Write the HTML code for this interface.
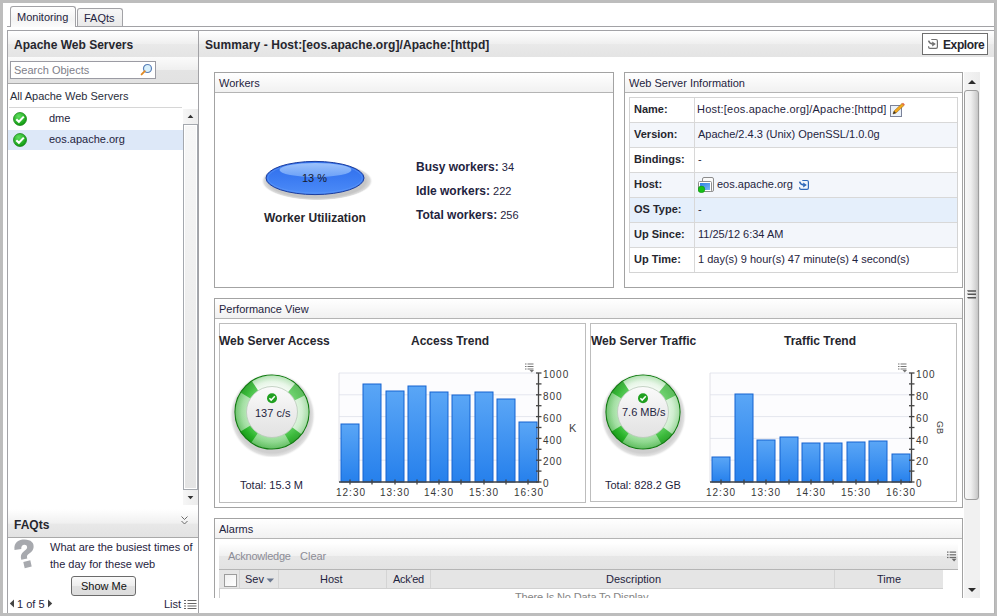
<!DOCTYPE html>
<html><head><meta charset="utf-8"><style>
*{box-sizing:border-box;margin:0;padding:0}
html,body{width:997px;height:616px;overflow:hidden}
body{position:relative;background:#bdbdbd;font-family:"Liberation Sans",sans-serif;font-size:11px;color:#1f2440}
.a{position:absolute}
.t{position:absolute;white-space:nowrap;line-height:13px}
.b{font-weight:bold;font-size:12px;color:#26262e}
.hd{background:linear-gradient(#ffffff 0%,#efefef 50%,#e9e9e9 52%,#e4e4e4 100%)}
.pn{position:absolute;border:1px solid #a3a3a3;background:#fff}
.ax{font-size:10px;color:#383838;letter-spacing:1px;line-height:13px}
.ph{position:absolute;left:0;top:0;right:0;height:20px;border-bottom:1px solid #b4b4b4;background:linear-gradient(#ffffff,#f1f1f1)}
</style></head><body>
<div class="a" style="left:3px;top:3px;width:991px;height:610px;background:#fff"></div>
<div class="a" style="left:994px;top:3px;width:1px;height:611px;background:#b3b3b3"></div>

<!-- tabs -->
<div class="a" style="left:7px;top:26px;width:987px;height:1px;background:#a2a2a6"></div>
<div class="a" style="left:10px;top:6px;width:66px;height:21px;border:1px solid #a2a2a6;border-bottom:none;border-radius:3px 3px 0 0;background:linear-gradient(#fff 0%,#f3f3f3 60%,#fbfbfb)"></div>
<div class="t" style="left:17px;top:11px">Monitoring</div>
<div class="a" style="left:77px;top:8px;width:46px;height:18px;border:1px solid #a2a2a6;border-bottom:none;border-radius:3px 3px 0 0;background:linear-gradient(#f7f7f7,#e9e9e9)"></div>
<div class="t" style="left:84px;top:12px">FAQts</div>

<!-- main frame -->
<div class="a" style="left:7px;top:30px;width:987px;height:1px;background:#a2a2a6"></div>
<div class="a" style="left:7px;top:30px;width:1px;height:583px;background:#a2a2a6"></div>
<div class="a" style="left:198px;top:30px;width:1px;height:583px;background:#a2a2a6"></div>

<!-- left panel -->
<div class="a hd" style="left:8px;top:31px;width:190px;height:26px"></div>
<div class="t b" style="left:14px;top:39px">Apache Web Servers</div>

<div class="a" style="left:8px;top:57px;width:190px;height:27px;border-bottom:1px solid #a9a9a9;background:linear-gradient(#fbfbfb 0%,#efefef 50%,#e4e4e4 50%,#e2e2e2 100%)"></div>
<div class="a" style="left:10px;top:61px;width:146px;height:18px;border:1px solid #9b9ba3;background:#fff"></div>
<div class="t" style="left:14px;top:64px;color:#80808a">Search Objects</div>
<svg class="a" style="left:139px;top:63px" width="14" height="14" viewBox="0 0 14 14"><circle cx="8.5" cy="5.5" r="4" fill="#d8f0fc" stroke="#5a7fb8" stroke-width="1.2"/><line x1="5.8" y1="8.2" x2="2.6" y2="11.4" stroke="#e08a26" stroke-width="1.9" stroke-linecap="round"/></svg>
<div class="t" style="left:10px;top:90px;color:#2a2e3c">All Apache Web Servers</div>
<div class="a" style="left:9px;top:107px;width:173px;height:1px;background:#d6d6d6"></div>
<div class="a" style="left:8px;top:130px;width:175px;height:20px;background:#dde8f8"></div>
<svg class="a" style="left:13px;top:112px" width="14" height="14" viewBox="0 0 14 14"><defs><radialGradient id="gck" cx="0.4" cy="0.3" r="0.7"><stop offset="0" stop-color="#5fe05f"/><stop offset="1" stop-color="#109a10"/></radialGradient></defs><circle cx="7" cy="7" r="6.5" fill="url(#gck)" stroke="#0b7a0b" stroke-width="0.7"/><path d="M3.3 7.2 L5.9 9.8 L10.8 4.6" fill="none" stroke="#fff" stroke-width="2.1"/></svg>
<svg class="a" style="left:13px;top:133px" width="14" height="14" viewBox="0 0 14 14"><circle cx="7" cy="7" r="6.5" fill="url(#gck)" stroke="#0b7a0b" stroke-width="0.7"/><path d="M3.3 7.2 L5.9 9.8 L10.8 4.6" fill="none" stroke="#fff" stroke-width="2.1"/></svg>
<div class="t" style="left:49px;top:112px">dme</div>
<div class="t" style="left:49px;top:133px">eos.apache.org</div>
<!-- left scrollbar -->
<div class="a" style="left:183px;top:109px;width:15px;height:396px;background:#f4f4f4"></div>
<div class="a" style="left:183px;top:109px;width:15px;height:15px;background:linear-gradient(90deg,#f6f6f6,#ececec)"></div>
<svg class="a" style="left:185px;top:113px" width="11" height="6"><path d="M2.6 5 L5.5 1.8 L8.4 5Z" fill="#333"/></svg>
<div class="a" style="left:183px;top:124px;width:15px;height:366px;border:1px solid #a4a8ae;border-top-color:#a4a8ae;background:#fff"></div>
<div class="a" style="left:185px;top:126px;width:11px;height:362px;background:linear-gradient(#f7f7f7,#e4e4e4)"></div>
<div class="a" style="left:183px;top:490px;width:15px;height:15px;background:linear-gradient(90deg,#f6f6f6,#ececec)"></div>
<svg class="a" style="left:185px;top:495px" width="11" height="6"><path d="M2.6 1 L5.5 4.2 L8.4 1Z" fill="#333"/></svg>
<!-- FAQts -->
<div class="a" style="left:8px;top:509px;width:190px;height:29px;border-bottom:1px solid #a9a9a9;background:linear-gradient(#ffffff 0%,#f0f0f0 50%,#e8e8e8 55%,#e2e2e2 100%)"></div>
<div class="t b" style="left:14px;top:519px">FAQts</div>
<svg class="a" style="left:180px;top:515px" width="10" height="12"><path d="M1.5 1.5 L4.5 4.5 L7.5 1.5 M1.5 6 L4.5 9 L7.5 6" fill="none" stroke="#6a6a6a" stroke-width="1"/></svg>
<svg class="a" style="left:12px;top:538px" width="24" height="32" viewBox="0 0 24 32"><path d="M2.5 12 C1.5 4 7 1.5 12.5 1.5 C19 1.5 22.5 5 21.5 10 C20.8 13.5 18 15 16 16.5 C14.5 17.6 15 19 15.3 20.5 L9.3 21.8 C8.2 18 9 15.2 12 13.2 C14.3 11.7 15.3 10.5 15.1 9 C14.9 7.3 13.6 6.6 12 6.8 C9.8 7.1 9.1 8.8 9.3 11 Z M11.3 24 L18.3 22.3 L19.7 28.6 L12.7 30.3 Z" fill="#a7a9ae"/></svg>
<div class="t" style="left:50px;top:539px;line-height:17px;width:150px;white-space:normal">What are the busiest times of<br>the day for these web</div>
<div class="a" style="left:71px;top:576px;width:65px;height:20px;border:1px solid #6b6b6b;border-radius:3px;background:linear-gradient(#fafafa 0%,#ededed 50%,#e1e1e1 52%,#dcdcdc 100%)"></div>
<div class="t" style="left:81px;top:580px;color:#111">Show Me</div>
<svg class="a" style="left:9px;top:599px" width="6" height="9"><path d="M5 0.5 L0.8 4.5 L5 8.5Z" fill="#444"/></svg>
<div class="t" style="left:17px;top:598px">1 of 5</div>
<svg class="a" style="left:47px;top:599px" width="6" height="9"><path d="M1 0.5 L5.2 4.5 L1 8.5Z" fill="#444"/></svg>
<div class="t" style="left:164px;top:598px">List</div>
<svg class="a" style="left:184px;top:599px" width="13" height="11"><g fill="#666"><rect x="0" y="1" width="2" height="1"/><rect x="0" y="4" width="2" height="1"/><rect x="0" y="6.5" width="2" height="1"/><rect x="0" y="9" width="2" height="1"/><rect x="3.5" y="1" width="9" height="1"/><rect x="3.5" y="4" width="9" height="1"/><rect x="3.5" y="6.5" width="9" height="1"/><rect x="3.5" y="9" width="9" height="1"/></g></svg>

<!-- right header -->
<div class="a hd" style="left:199px;top:31px;width:795px;height:26px;background:linear-gradient(#ffffff 0%,#efefef 50%,#e9e9e9 52%,#e4e4e4 100%)"></div>
<div class="t b" style="left:205px;top:39px;letter-spacing:0.08px">Summary - Host:[eos.apache.org]/Apache:[httpd]</div>
<div class="a" style="left:922px;top:33px;width:66px;height:22px;border:1px solid #6e6e6e;background:#fff"></div>
<svg class="a" style="left:927px;top:38px" width="12" height="12" viewBox="0 0 12 12"><path d="M4.3 1.5 H9 Q10.4 1.5 10.4 3 V9 Q10.4 10.4 9 10.4 H3 Q1.6 10.4 1.6 9 V8.3" fill="none" stroke="#707070" stroke-width="1.2"/><path d="M1.6 2.6 Q2.4 5.6 5.6 5.9" fill="none" stroke="#707070" stroke-width="1.6"/><path d="M5.2 3.6 L8.8 6 L5.2 8.4Z" fill="#707070"/></svg>
<div class="t b" style="left:943px;top:39px;letter-spacing:-0.4px">Explore</div>

<!-- Workers -->
<div class="pn" style="left:214px;top:72px;width:400px;height:216px"><div class="ph"></div></div>
<div class="t" style="left:219px;top:77px">Workers</div>
<svg class="a" style="left:258px;top:156px" width="118" height="48" viewBox="0 0 118 48">
<defs>
<radialGradient id="gsh" cx="0.5" cy="0.5" r="0.5"><stop offset="0.87" stop-color="#c6c6c6"/><stop offset="0.95" stop-color="#dddddd"/><stop offset="1" stop-color="#ffffff" stop-opacity="0"/></radialGradient>
<linearGradient id="gbl" x1="0" y1="0" x2="0" y2="1"><stop offset="0" stop-color="#2f6cea"/><stop offset="0.5" stop-color="#3b7bf2"/><stop offset="1" stop-color="#4d8cf7"/></linearGradient>
<linearGradient id="ghl" x1="0" y1="0" x2="0" y2="1"><stop offset="0" stop-color="#a2c6fc"/><stop offset="1" stop-color="#6ea3f8"/></linearGradient>
</defs>
<ellipse cx="59" cy="25" rx="56" ry="19.5" fill="url(#gsh)"/>
<ellipse cx="57" cy="22" rx="49" ry="16.6" fill="url(#gbl)" stroke="#1a3c9e" stroke-width="1"/>
<ellipse cx="57" cy="22" rx="47.3" ry="15" fill="none" stroke="#5d97f8" stroke-width="1" opacity="0.6"/>
<ellipse cx="57.5" cy="14" rx="36" ry="7" fill="url(#ghl)" opacity="0.95"/>
</svg>
<div class="t" style="left:302px;top:172px;color:#1a1a2a">13 %</div>
<div class="t b" style="left:264px;top:212px">Worker Utilization</div>
<div class="t" style="left:416px;top:161px"><b style="font-size:12px">Busy workers:</b> 34</div>
<div class="t" style="left:416px;top:185px"><b style="font-size:12px">Idle workers:</b> 222</div>
<div class="t" style="left:416px;top:209px"><b style="font-size:12px">Total workers:</b> 256</div>

<!-- Web Server Information -->
<div class="pn" style="left:624px;top:72px;width:339px;height:216px"><div class="ph"></div></div>
<div class="t" style="left:629px;top:77px">Web Server Information</div>
<div class="a" style="left:629px;top:97px;width:329px;height:176px;border:1px solid #d4d4d4;background:#fff"></div>
<div class="a" style="left:630px;top:123px;width:327px;height:24px;background:#f3f6fb"></div>
<div class="a" style="left:630px;top:173px;width:327px;height:24px;background:#f3f6fb"></div>
<div class="a" style="left:630px;top:198px;width:327px;height:24px;background:#e5effb"></div>
<div class="a" style="left:630px;top:223px;width:327px;height:24px;background:#f3f6fb"></div>
<div class="a" style="left:630px;top:122px;width:327px;height:1px;background:#d8d8d8"></div>
<div class="a" style="left:630px;top:147px;width:327px;height:1px;background:#d8d8d8"></div>
<div class="a" style="left:630px;top:172px;width:327px;height:1px;background:#d8d8d8"></div>
<div class="a" style="left:630px;top:197px;width:327px;height:1px;background:#d8d8d8"></div>
<div class="a" style="left:630px;top:222px;width:327px;height:1px;background:#d8d8d8"></div>
<div class="a" style="left:630px;top:247px;width:327px;height:1px;background:#d8d8d8"></div>
<div class="a" style="left:694px;top:98px;width:1px;height:174px;background:#d8d8d8"></div>
<div class="t b" style="left:634px;top:103px;font-size:11px">Name:</div>
<div class="t b" style="left:634px;top:128px;font-size:11px">Version:</div>
<div class="t b" style="left:634px;top:153px;font-size:11px">Bindings:</div>
<div class="t b" style="left:634px;top:178px;font-size:11px">Host:</div>
<div class="t b" style="left:634px;top:203px;font-size:11px">OS Type:</div>
<div class="t b" style="left:634px;top:228px;font-size:11px">Up Since:</div>
<div class="t b" style="left:634px;top:253px;font-size:11px">Up Time:</div>
<div class="t" style="left:697px;top:103px;letter-spacing:0.22px">Host:[eos.apache.org]/Apache:[httpd]</div>
<svg class="a" style="left:889px;top:102px" width="17" height="16" viewBox="0 0 17 16"><rect x="1.5" y="3.5" width="11" height="11" fill="#eaf1fa" stroke="#7b8299" stroke-width="1"/><path d="M4 12 L5 9 L13 1.5 L15 3.5 L7 11 Z" fill="#f2a81d" stroke="#8a5a10" stroke-width="0.5"/><path d="M13 1.5 L14 0.8 L15.8 2.6 L15 3.5Z" fill="#e85a3a"/><path d="M4 12 L5 9 L7 11Z" fill="#333"/></svg>
<div class="t" style="left:698px;top:128px">Apache/2.4.3 (Unix) OpenSSL/1.0.0g</div>
<div class="t" style="left:698px;top:153px">-</div>
<svg class="a" style="left:698px;top:177px" width="17" height="16" viewBox="0 0 17 16"><defs><linearGradient id="ghost" x1="0" y1="0" x2="1" y2="1"><stop offset="0" stop-color="#2f80e4"/><stop offset="1" stop-color="#7ab8f7"/></linearGradient></defs><rect x="4.5" y="0.5" width="11" height="14" rx="1.5" fill="#fafafa" stroke="#8c8c8c"/><rect x="0.5" y="4.5" width="13" height="10" rx="1" fill="#ffffff" stroke="#8c8c8c"/><rect x="2" y="6" width="10" height="7" fill="url(#ghost)"/><circle cx="3.5" cy="12.4" r="3.3" fill="#16c016" stroke="#0a8a0a" stroke-width="0.5"/></svg>
<div class="t" style="left:717px;top:178px">eos.apache.org</div>
<svg class="a" style="left:798px;top:179px" width="12" height="12" viewBox="0 0 12 12"><path d="M4.3 1.5 H9 Q10.4 1.5 10.4 3 V9 Q10.4 10.4 9 10.4 H3 Q1.6 10.4 1.6 9 V8.3" fill="none" stroke="#2f68b8" stroke-width="1.2"/><path d="M1.6 2.6 Q2.4 5.6 5.6 5.9" fill="none" stroke="#2f68b8" stroke-width="1.6"/><path d="M5.2 3.6 L8.8 6 L5.2 8.4Z" fill="#2f68b8"/></svg>
<div class="t" style="left:698px;top:203px">-</div>
<div class="t" style="left:698px;top:228px">11/25/12 6:34 AM</div>
<div class="t" style="left:698px;top:253px">1 day(s) 9 hour(s) 47 minute(s) 4 second(s)</div>

<!--PERF-->
<svg width="0" height="0" style="position:absolute"><defs><linearGradient id="gbar" x1="0" y1="0" x2="0" y2="1"><stop offset="0" stop-color="#5aa6f6"/><stop offset="1" stop-color="#2680ec"/></linearGradient>
<radialGradient id="gsh2" cx="0.5" cy="0.5" r="0.5"><stop offset="0.87" stop-color="#cfcfcf"/><stop offset="0.94" stop-color="#e2e2e2"/><stop offset="1" stop-color="#ffffff" stop-opacity="0"/></radialGradient>
<linearGradient id="ginner" x1="0" y1="0" x2="0" y2="1"><stop offset="0" stop-color="#fbfbfb"/><stop offset="0.5" stop-color="#ededed"/><stop offset="1" stop-color="#e2e2e2"/></linearGradient><radialGradient id="gring" cx="0.5" cy="0.5" r="0.5"><stop offset="0.65" stop-color="#48c848"/><stop offset="0.85" stop-color="#22b022"/><stop offset="1" stop-color="#169a16"/></radialGradient><linearGradient id="ggloss" x1="1" y1="0" x2="0" y2="1"><stop offset="0" stop-color="#ffffff" stop-opacity="0.35"/><stop offset="0.55" stop-color="#ffffff" stop-opacity="0.1"/><stop offset="1" stop-color="#ffffff" stop-opacity="0"/></linearGradient><radialGradient id="gstrap2" gradientUnits="userSpaceOnUse" cx="0" cy="0" r="37"><stop offset="0.66" stop-color="#ffffff"/><stop offset="0.82" stop-color="#e8f6e8"/><stop offset="1" stop-color="#a0daa0"/></radialGradient><linearGradient id="gstrap" x1="0" y1="0" x2="1" y2="1"><stop offset="0" stop-color="#f4fbf4"/><stop offset="1" stop-color="#d9efd9"/></linearGradient>
</defs></svg>
<div class="pn" style="left:214px;top:298px;width:749px;height:210px"><div class="ph"></div></div>
<div class="t" style="left:219px;top:303px">Performance View</div>
<div class="a" style="left:219px;top:323px;width:367px;height:180px;border:1px solid #bdbdbd"></div>
<div class="a" style="left:590px;top:323px;width:367px;height:179px;border:1px solid #bdbdbd"></div>
<div class="t b" style="left:219px;top:335px">Web Server Access</div>
<div class="t b" style="left:411px;top:335px">Access Trend</div>
<div class="t b" style="left:591px;top:335px">Web Server Traffic</div>
<div class="t b" style="left:784px;top:335px">Traffic Trend</div>
<svg class="a" style="left:227px;top:367px" width="90" height="90" viewBox="-45 -45 90 90">
<circle cx="0.5" cy="3.5" r="43" fill="url(#gsh2)"/>
<circle cx="0" cy="0" r="37" fill="url(#gring)" stroke="#127a12" stroke-width="1.2"/>
<path d="M-19.88 -30.61 A36.5 36.5 0 0 1 22.97 -28.37 L15.10 -18.65 A24 24 0 0 0 -13.07 -20.13Z" fill="url(#gstrap2)" opacity="0.95"/>
<path d="M32.52 -16.57 A36.5 36.5 0 0 1 29.15 21.97 L19.17 14.44 A24 24 0 0 0 21.38 -10.90Z" fill="url(#gstrap2)" opacity="0.8"/>
<path d="M18.25 31.61 A36.5 36.5 0 0 1 -20.41 30.26 L-13.42 19.90 A24 24 0 0 0 12.00 20.78Z" fill="url(#gstrap2)" opacity="0.5"/>
<path d="M-30.95 19.34 A36.5 36.5 0 0 1 -30.95 -19.34 L-20.35 -12.72 A24 24 0 0 0 -20.35 12.72Z" fill="url(#gstrap2)" opacity="0.6"/>
<circle cx="0" cy="0" r="30.5" fill="none" stroke="url(#ggloss)" stroke-width="12"/>
<circle cx="0" cy="0" r="25.5" fill="url(#ginner)" stroke="#b9c9b9" stroke-width="0.8"/>
<circle cx="0" cy="-13.8" r="5" fill="#20a020"/><path d="M-2.6 -13.8 L-0.8 -11.9 L2.8 -15.7" fill="none" stroke="#fff" stroke-width="1.5"/>
</svg>
<div class="t" style="left:255px;top:407px">137 c/s</div>
<div class="t" style="left:240px;top:479px">Total: 15.3 M</div>
<svg class="a" style="left:598px;top:367px" width="90" height="90" viewBox="-45 -45 90 90">
<circle cx="0.5" cy="3.5" r="43" fill="url(#gsh2)"/>
<circle cx="0" cy="0" r="37" fill="url(#gring)" stroke="#127a12" stroke-width="1.2"/>
<path d="M-19.88 -30.61 A36.5 36.5 0 0 1 22.97 -28.37 L15.10 -18.65 A24 24 0 0 0 -13.07 -20.13Z" fill="url(#gstrap2)" opacity="0.95"/>
<path d="M32.52 -16.57 A36.5 36.5 0 0 1 29.15 21.97 L19.17 14.44 A24 24 0 0 0 21.38 -10.90Z" fill="url(#gstrap2)" opacity="0.8"/>
<path d="M18.25 31.61 A36.5 36.5 0 0 1 -20.41 30.26 L-13.42 19.90 A24 24 0 0 0 12.00 20.78Z" fill="url(#gstrap2)" opacity="0.5"/>
<path d="M-30.95 19.34 A36.5 36.5 0 0 1 -30.95 -19.34 L-20.35 -12.72 A24 24 0 0 0 -20.35 12.72Z" fill="url(#gstrap2)" opacity="0.6"/>
<circle cx="0" cy="0" r="30.5" fill="none" stroke="url(#ggloss)" stroke-width="12"/>
<circle cx="0" cy="0" r="25.5" fill="url(#ginner)" stroke="#b9c9b9" stroke-width="0.8"/>
<circle cx="0" cy="-13.8" r="5" fill="#20a020"/><path d="M-2.6 -13.8 L-0.8 -11.9 L2.8 -15.7" fill="none" stroke="#fff" stroke-width="1.5"/>
</svg>
<div class="t" style="left:622px;top:406px">7.6 MB/s</div>
<div class="t" style="left:605px;top:479px">Total: 828.2 GB</div>
<svg class="a" style="left:328.5px;top:352.5px" width="269.5" height="149.0" viewBox="328.5 352.5 269.5 149.0">
<rect x="338.5" y="372.5" width="199.5" height="109.0" fill="#fcfcfe"/>
<line x1="338.5" y1="372.50" x2="538" y2="372.50" stroke="#e4e6ee" stroke-width="1"/>
<line x1="338.5" y1="394.30" x2="538" y2="394.30" stroke="#e4e6ee" stroke-width="1"/>
<line x1="338.5" y1="416.10" x2="538" y2="416.10" stroke="#e4e6ee" stroke-width="1"/>
<line x1="338.5" y1="437.90" x2="538" y2="437.90" stroke="#e4e6ee" stroke-width="1"/>
<line x1="338.5" y1="459.70" x2="538" y2="459.70" stroke="#e4e6ee" stroke-width="1"/>
<line x1="338.5" y1="481.50" x2="538" y2="481.50" stroke="#e4e6ee" stroke-width="1"/>
<line x1="338.5" y1="372.5" x2="338.5" y2="481.5" stroke="#e0e0e6" stroke-width="1"/>
<rect x="340.50" y="423.50" width="18.00" height="58.00" fill="url(#gbar)" stroke="#1462d0" stroke-width="1"/>
<line x1="349.5" y1="479.0" x2="349.5" y2="484.0" stroke="#444" stroke-width="1.3"/>
<rect x="362.50" y="383.50" width="18.00" height="98.00" fill="url(#gbar)" stroke="#1462d0" stroke-width="1"/>
<line x1="371.5" y1="479.0" x2="371.5" y2="484.0" stroke="#444" stroke-width="1.3"/>
<rect x="385.50" y="390.50" width="18.00" height="91.00" fill="url(#gbar)" stroke="#1462d0" stroke-width="1"/>
<line x1="394.5" y1="479.0" x2="394.5" y2="484.0" stroke="#444" stroke-width="1.3"/>
<rect x="407.50" y="385.50" width="18.00" height="96.00" fill="url(#gbar)" stroke="#1462d0" stroke-width="1"/>
<line x1="416.5" y1="479.0" x2="416.5" y2="484.0" stroke="#444" stroke-width="1.3"/>
<rect x="429.50" y="391.50" width="18.00" height="90.00" fill="url(#gbar)" stroke="#1462d0" stroke-width="1"/>
<line x1="438.5" y1="479.0" x2="438.5" y2="484.0" stroke="#444" stroke-width="1.3"/>
<rect x="451.50" y="394.50" width="18.00" height="87.00" fill="url(#gbar)" stroke="#1462d0" stroke-width="1"/>
<line x1="460.5" y1="479.0" x2="460.5" y2="484.0" stroke="#444" stroke-width="1.3"/>
<rect x="474.50" y="391.50" width="18.00" height="90.00" fill="url(#gbar)" stroke="#1462d0" stroke-width="1"/>
<line x1="483.5" y1="479.0" x2="483.5" y2="484.0" stroke="#444" stroke-width="1.3"/>
<rect x="496.50" y="398.50" width="18.00" height="83.00" fill="url(#gbar)" stroke="#1462d0" stroke-width="1"/>
<line x1="505.5" y1="479.0" x2="505.5" y2="484.0" stroke="#444" stroke-width="1.3"/>
<rect x="518.50" y="421.50" width="18.00" height="60.00" fill="url(#gbar)" stroke="#1462d0" stroke-width="1"/>
<line x1="527.5" y1="479.0" x2="527.5" y2="484.0" stroke="#444" stroke-width="1.3"/>
<line x1="338.5" y1="481.5" x2="538.5" y2="481.5" stroke="#444" stroke-width="1.3"/>
<line x1="538" y1="372.5" x2="538" y2="481.5" stroke="#444" stroke-width="1.3"/>
<line x1="535.5" y1="372.50" x2="541" y2="372.50" stroke="#444" stroke-width="1.3"/>
<line x1="535.5" y1="383.40" x2="541" y2="383.40" stroke="#444" stroke-width="1.3"/>
<line x1="535.5" y1="394.30" x2="541" y2="394.30" stroke="#444" stroke-width="1.3"/>
<line x1="535.5" y1="405.20" x2="541" y2="405.20" stroke="#444" stroke-width="1.3"/>
<line x1="535.5" y1="416.10" x2="541" y2="416.10" stroke="#444" stroke-width="1.3"/>
<line x1="535.5" y1="427.00" x2="541" y2="427.00" stroke="#444" stroke-width="1.3"/>
<line x1="535.5" y1="437.90" x2="541" y2="437.90" stroke="#444" stroke-width="1.3"/>
<line x1="535.5" y1="448.80" x2="541" y2="448.80" stroke="#444" stroke-width="1.3"/>
<line x1="535.5" y1="459.70" x2="541" y2="459.70" stroke="#444" stroke-width="1.3"/>
<line x1="535.5" y1="470.60" x2="541" y2="470.60" stroke="#444" stroke-width="1.3"/>
<line x1="535.5" y1="481.50" x2="541" y2="481.50" stroke="#444" stroke-width="1.3"/>
</svg>
<svg class="a" style="left:699.5px;top:352.5px" width="271.5" height="149.0" viewBox="699.5 352.5 271.5 149.0">
<rect x="709.5" y="372.5" width="201.5" height="109.0" fill="#fcfcfe"/>
<line x1="709.5" y1="372.50" x2="911" y2="372.50" stroke="#e4e6ee" stroke-width="1"/>
<line x1="709.5" y1="394.30" x2="911" y2="394.30" stroke="#e4e6ee" stroke-width="1"/>
<line x1="709.5" y1="416.10" x2="911" y2="416.10" stroke="#e4e6ee" stroke-width="1"/>
<line x1="709.5" y1="437.90" x2="911" y2="437.90" stroke="#e4e6ee" stroke-width="1"/>
<line x1="709.5" y1="459.70" x2="911" y2="459.70" stroke="#e4e6ee" stroke-width="1"/>
<line x1="709.5" y1="481.50" x2="911" y2="481.50" stroke="#e4e6ee" stroke-width="1"/>
<line x1="709.5" y1="372.5" x2="709.5" y2="481.5" stroke="#e0e0e6" stroke-width="1"/>
<rect x="711.50" y="456.50" width="18.00" height="25.00" fill="url(#gbar)" stroke="#1462d0" stroke-width="1"/>
<line x1="720.5" y1="479.0" x2="720.5" y2="484.0" stroke="#444" stroke-width="1.3"/>
<rect x="734.50" y="393.50" width="18.00" height="88.00" fill="url(#gbar)" stroke="#1462d0" stroke-width="1"/>
<line x1="743.5" y1="479.0" x2="743.5" y2="484.0" stroke="#444" stroke-width="1.3"/>
<rect x="756.50" y="439.50" width="18.00" height="42.00" fill="url(#gbar)" stroke="#1462d0" stroke-width="1"/>
<line x1="765.5" y1="479.0" x2="765.5" y2="484.0" stroke="#444" stroke-width="1.3"/>
<rect x="779.50" y="436.50" width="18.00" height="45.00" fill="url(#gbar)" stroke="#1462d0" stroke-width="1"/>
<line x1="788.5" y1="479.0" x2="788.5" y2="484.0" stroke="#444" stroke-width="1.3"/>
<rect x="801.50" y="442.50" width="18.00" height="39.00" fill="url(#gbar)" stroke="#1462d0" stroke-width="1"/>
<line x1="810.5" y1="479.0" x2="810.5" y2="484.0" stroke="#444" stroke-width="1.3"/>
<rect x="823.50" y="442.50" width="18.00" height="39.00" fill="url(#gbar)" stroke="#1462d0" stroke-width="1"/>
<line x1="832.5" y1="479.0" x2="832.5" y2="484.0" stroke="#444" stroke-width="1.3"/>
<rect x="846.50" y="441.50" width="18.00" height="40.00" fill="url(#gbar)" stroke="#1462d0" stroke-width="1"/>
<line x1="855.5" y1="479.0" x2="855.5" y2="484.0" stroke="#444" stroke-width="1.3"/>
<rect x="868.50" y="440.50" width="18.00" height="41.00" fill="url(#gbar)" stroke="#1462d0" stroke-width="1"/>
<line x1="877.5" y1="479.0" x2="877.5" y2="484.0" stroke="#444" stroke-width="1.3"/>
<rect x="891.50" y="453.50" width="18.00" height="28.00" fill="url(#gbar)" stroke="#1462d0" stroke-width="1"/>
<line x1="900.5" y1="479.0" x2="900.5" y2="484.0" stroke="#444" stroke-width="1.3"/>
<line x1="709.5" y1="481.5" x2="911.5" y2="481.5" stroke="#444" stroke-width="1.3"/>
<line x1="911" y1="372.5" x2="911" y2="481.5" stroke="#444" stroke-width="1.3"/>
<line x1="908.5" y1="372.50" x2="914" y2="372.50" stroke="#444" stroke-width="1.3"/>
<line x1="908.5" y1="383.40" x2="914" y2="383.40" stroke="#444" stroke-width="1.3"/>
<line x1="908.5" y1="394.30" x2="914" y2="394.30" stroke="#444" stroke-width="1.3"/>
<line x1="908.5" y1="405.20" x2="914" y2="405.20" stroke="#444" stroke-width="1.3"/>
<line x1="908.5" y1="416.10" x2="914" y2="416.10" stroke="#444" stroke-width="1.3"/>
<line x1="908.5" y1="427.00" x2="914" y2="427.00" stroke="#444" stroke-width="1.3"/>
<line x1="908.5" y1="437.90" x2="914" y2="437.90" stroke="#444" stroke-width="1.3"/>
<line x1="908.5" y1="448.80" x2="914" y2="448.80" stroke="#444" stroke-width="1.3"/>
<line x1="908.5" y1="459.70" x2="914" y2="459.70" stroke="#444" stroke-width="1.3"/>
<line x1="908.5" y1="470.60" x2="914" y2="470.60" stroke="#444" stroke-width="1.3"/>
<line x1="908.5" y1="481.50" x2="914" y2="481.50" stroke="#444" stroke-width="1.3"/>
</svg>
<div class="t ax" style="left:543px;top:368px">1000</div>
<div class="t ax" style="left:543px;top:390px">800</div>
<div class="t ax" style="left:543px;top:412px">600</div>
<div class="t ax" style="left:543px;top:434px">400</div>
<div class="t ax" style="left:543px;top:455px">200</div>
<div class="t ax" style="left:543px;top:477px">0</div>
<div class="t ax" style="left:916px;top:368px">100</div>
<div class="t ax" style="left:916px;top:390px">80</div>
<div class="t ax" style="left:916px;top:412px">60</div>
<div class="t ax" style="left:916px;top:434px">40</div>
<div class="t ax" style="left:916px;top:455px">20</div>
<div class="t ax" style="left:916px;top:477px">0</div>
<div class="t ax" style="left:336px;top:486px">12:30</div>
<div class="t ax" style="left:380px;top:486px">13:30</div>
<div class="t ax" style="left:424px;top:486px">14:30</div>
<div class="t ax" style="left:469px;top:486px">15:30</div>
<div class="t ax" style="left:514px;top:486px">16:30</div>
<div class="t ax" style="left:706px;top:486px">12:30</div>
<div class="t ax" style="left:751px;top:486px">13:30</div>
<div class="t ax" style="left:796px;top:486px">14:30</div>
<div class="t ax" style="left:841px;top:486px">15:30</div>
<div class="t ax" style="left:886px;top:486px">16:30</div>
<div class="t" style="left:569px;top:422px;color:#444">K</div>
<div class="t" style="left:946px;top:421px;color:#3a3a3a;font-size:9px;transform:rotate(90deg);transform-origin:0 0">GB</div>
<svg class="a" style="left:525px;top:363px" width="10" height="10" viewBox="0 0 10 10"><g fill="#777"><rect x="0" y="0.5" width="1.5" height="1"/><rect x="0" y="3" width="1.5" height="1"/><rect x="0" y="5.5" width="1.5" height="1"/><rect x="2.5" y="0.5" width="6" height="1"/><rect x="2.5" y="3" width="6" height="1"/><rect x="2.5" y="5.5" width="6" height="1"/><path d="M4.5 7 L9 7 L6.75 9.5Z"/></g></svg>
<svg class="a" style="left:898px;top:363px" width="10" height="10" viewBox="0 0 10 10"><g fill="#777"><rect x="0" y="0.5" width="1.5" height="1"/><rect x="0" y="3" width="1.5" height="1"/><rect x="0" y="5.5" width="1.5" height="1"/><rect x="2.5" y="0.5" width="6" height="1"/><rect x="2.5" y="3" width="6" height="1"/><rect x="2.5" y="5.5" width="6" height="1"/><path d="M4.5 7 L9 7 L6.75 9.5Z"/></g></svg>
<div class="pn" style="left:214px;top:518px;width:749px;height:95px"><div class="ph"></div></div>
<div class="t" style="left:219px;top:523px">Alarms</div>
<div class="a" style="left:219px;top:543px;width:739px;height:27px;border-bottom:1px solid #b5b5b5;background:linear-gradient(#ffffff 0%,#f1f1f1 48%,#e7e7e7 50%,#e3e3e3 100%)"></div>
<div class="t" style="left:228px;top:550px;color:#8c8c96;letter-spacing:-0.25px">Acknowledge</div>
<div class="t" style="left:300px;top:550px;color:#8c8c96">Clear</div>
<svg class="a" style="left:947px;top:551px" width="10" height="11" viewBox="0 0 10 11"><g fill="#6a6a6a"><rect x="0" y="0.5" width="1.5" height="1.2"/><rect x="0" y="3.2" width="1.5" height="1.2"/><rect x="0" y="5.9" width="1.5" height="1.2"/><rect x="2.6" y="0.5" width="6.5" height="1.2"/><rect x="2.6" y="3.2" width="6.5" height="1.2"/><rect x="2.6" y="5.9" width="6.5" height="1.2"/><path d="M4.6 7.8 L9.6 7.8 L7.1 10.4Z"/></g></svg>
<div class="a" style="left:219px;top:570px;width:724px;height:19px;border-bottom:1px solid #d0d0d0;background:#e5e5e5"></div>
<div class="a" style="left:224px;top:574px;width:13px;height:13px;border:1px solid #9c9c9c;background:linear-gradient(135deg,#f0f0f0,#ffffff)"></div>
<div class="a" style="left:239px;top:570px;width:1px;height:18px;background:#d4d4d4"></div>
<div class="a" style="left:278px;top:570px;width:1px;height:18px;background:#d4d4d4"></div>
<div class="a" style="left:386px;top:570px;width:1px;height:18px;background:#d4d4d4"></div>
<div class="a" style="left:430px;top:570px;width:1px;height:18px;background:#d4d4d4"></div>
<div class="a" style="left:834px;top:570px;width:1px;height:18px;background:#d4d4d4"></div>
<div class="a" style="left:219px;top:588px;width:1px;height:10px;background:#cfcfcf"></div>
<div class="t" style="left:245px;top:573px">Sev</div>
<svg class="a" style="left:266px;top:578px" width="9" height="5"><path d="M0.5 0.5 L8 0.5 L4.25 4.5Z" fill="#6b7890"/></svg>
<div class="t" style="left:320px;top:573px">Host</div>
<div class="t" style="left:393px;top:573px;letter-spacing:-0.3px">Ack&#39;ed</div>
<div class="t" style="left:606px;top:573px">Description</div>
<div class="t" style="left:877px;top:573px">Time</div>
<div class="t" style="left:515px;top:591px;color:#858585;letter-spacing:-0.15px">There Is No Data To Display</div>
<div class="a" style="left:199px;top:598px;width:765px;height:15px;background:#fff"></div>
<!--/PERF-->
<!-- right scrollbar -->
<div class="a" style="left:964px;top:72px;width:16px;height:526px;background:#f1f1f1"></div>
<div class="a" style="left:964px;top:72px;width:16px;height:18px;background:linear-gradient(90deg,#f4f4f4,#ececec)"></div>
<svg class="a" style="left:967px;top:79px" width="10" height="6"><path d="M1 5 L5 1 L9 5Z" fill="#2a2a2a"/></svg>
<div class="a" style="left:964px;top:90px;width:15px;height:410px;border:1px solid #9d9d9d;border-radius:3px;background:linear-gradient(90deg,#f8f8f8 0%,#efefef 45%,#d2d2d2 85%,#c4c4c4 100%)"></div>
<svg class="a" style="left:967px;top:290px" width="9" height="9"><g fill="#555"><path d="M0 0.3 H9 V1.8 H1Z"/><path d="M0 3.6 H9 V5.1 H1Z"/><path d="M0 6.9 H9 V8.4 H1Z"/></g></svg>
<div class="a" style="left:964px;top:580px;width:16px;height:18px;background:linear-gradient(90deg,#f4f4f4,#ececec)"></div>
<svg class="a" style="left:967px;top:587px" width="10" height="6"><path d="M1 1 L5 5 L9 1Z" fill="#2a2a2a"/></svg>
</body></html>
